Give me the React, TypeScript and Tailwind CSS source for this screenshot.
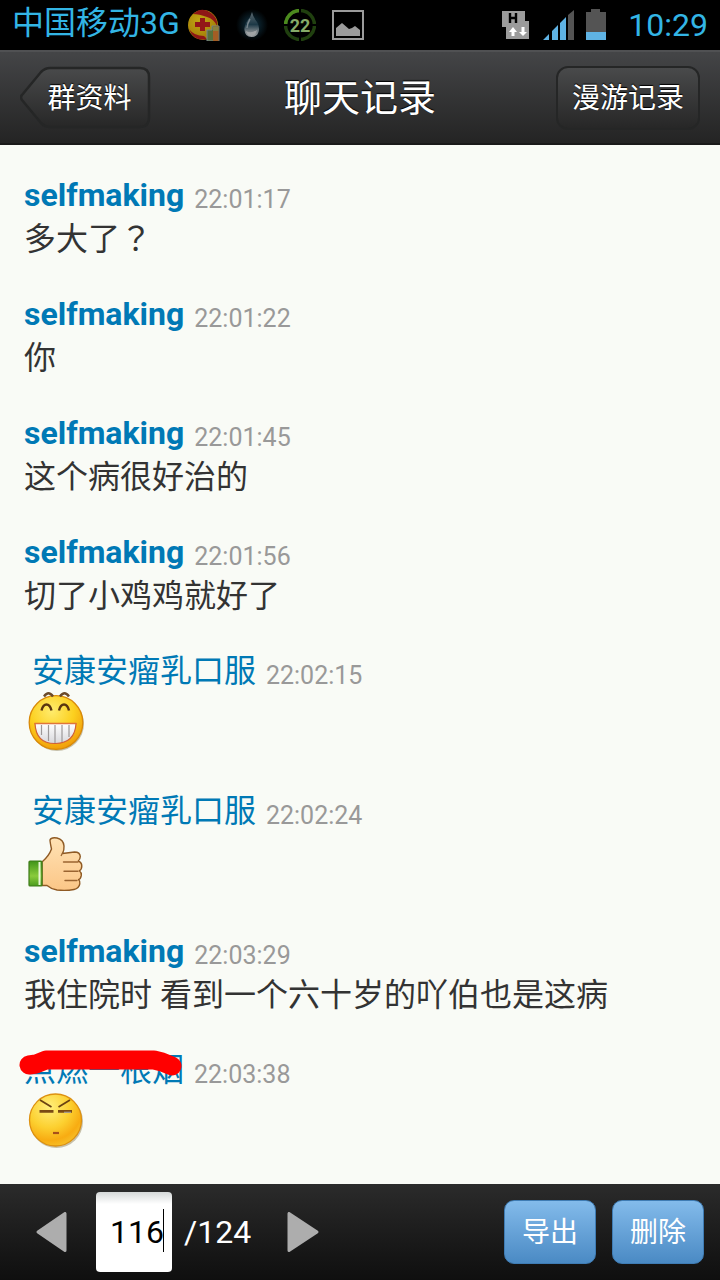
import React, { useState } from 'react';

interface Message {
  id: number;
  name: string;
  time: string;
  lang?: string;
  bold?: boolean;
  masked?: boolean;
  text?: string;
  emoji?: 'grin' | 'thumb' | 'squint';
}

const TOTAL_PAGES = 124;

const MESSAGES: Message[] = [
  { id: 1, name: 'selfmaking', time: '22:01:17', bold: true, lang: 'zh-TW', text: '多大了？' },
  { id: 2, name: 'selfmaking', time: '22:01:22', bold: true, text: '你' },
  { id: 3, name: 'selfmaking', time: '22:01:45', bold: true, text: '这个病很好治的' },
  { id: 4, name: 'selfmaking', time: '22:01:56', bold: true, text: '切了小鸡鸡就好了' },
  { id: 5, name: ' 安康安瘤乳口服', time: '22:02:15', emoji: 'grin' },
  { id: 6, name: ' 安康安瘤乳口服', time: '22:02:24', emoji: 'thumb' },
  { id: 7, name: 'selfmaking', time: '22:03:29', bold: true, text: '我住院时 看到一个六十岁的吖伯也是这病' },
  { id: 8, name: '点燃一根烟', time: '22:03:38', masked: true, emoji: 'squint' },
];

const Grin = () => (
  <svg className="block h-[65px] w-16" viewBox="0 0 64 65" role="img" aria-label="呲牙">
    <defs>
      <radialGradient id="grinFace" cx="0.42" cy="0.28" r="0.75">
        <stop offset="0" stopColor="#ffec6e" />
        <stop offset="0.55" stopColor="#fcd01f" />
        <stop offset="1" stopColor="#f09a08" />
      </radialGradient>
      <linearGradient id="teeth" x1="0" y1="0" x2="0" y2="1">
        <stop offset="0" stopColor="#ffffff" />
        <stop offset="1" stopColor="#d8d8dc" />
      </linearGradient>
    </defs>
    <circle cx="33" cy="33" r="27" fill="#8a7a50" opacity="0.45" />
    <circle cx="32" cy="31.500" r="26.800" fill="url(#grinFace)" stroke="#d98a08" strokeWidth="1.300" />
    <path d="M20 5.500q4.500-6.500 9 0M36 5.500q4.500-6.500 9 0" fill="none" stroke="#6b4a2a" strokeWidth="2.400" />
    <path d="M17.500 19.500q1.500-6 5-6t5 6M35 19.500q1.500-6 5-6t5 6" fill="none" stroke="#5a3510" strokeWidth="2.400" />
    <path d="M11 32.500h41q-1 19.500-20.500 20T11 32.500z" fill="url(#teeth)" stroke="#d0603a" strokeWidth="1.200" />
    <path d="M17.500 34v10M24.500 34v16M31 34v18M38 34v17M45 34v12" stroke="#9c9898" strokeWidth="1.200" />
    <path d="M10.500 32.500h42" stroke="#e0753a" strokeWidth="1.500" />
  </svg>
);

const Thumb = () => (
  <svg className="block h-[65px] w-16" viewBox="0 0 64 65" role="img" aria-label="强">
    <defs>
      <linearGradient id="cuff" x1="0" y1="0" x2="0" y2="1">
        <stop offset="0" stopColor="#3f9418" />
        <stop offset="0.6" stopColor="#8acb3c" />
        <stop offset="1" stopColor="#4b9c1e" />
      </linearGradient>
      <linearGradient id="skin" x1="0" y1="0" x2="0" y2="1">
        <stop offset="0" stopColor="#ffe2b4" />
        <stop offset="1" stopColor="#fbc687" />
      </linearGradient>
    </defs>
    <path
      d="M18 31q7-6 9.500-13-1.500-7-1.500-9 1-3 7-2 6.500 1.500 7 8 .3 4-1.500 7.500l12-1.500q5.500 0 5.800 4.500-.2 3-2 4.500 3.500 1.500 3.500 5t-2.500 4.800q2.300 1.700 2 4.600-.5 3.500-2.800 4.200 1.800 1.600 1.300 4.300-.8 4.600-5.800 5.600-8 1.500-17 .5-6-1-10-4.500h-5z"
      fill="url(#skin)"
      stroke="#8f5a24"
      strokeWidth="1.400"
      strokeLinejoin="round"
    />
    <path d="M39.500 31H54M40 40.300h14M41 49.500h12" fill="none" stroke="#9a6430" strokeWidth="1.400" strokeLinecap="round" />
    <path d="M38.500 22l-1.500 3" stroke="#9a6430" strokeWidth="1.200" />
    <rect x="5" y="30" width="13" height="25" rx="1" fill="url(#cuff)" stroke="#3d7a18" strokeWidth="1.200" />
    <path d="M15.500 31v23" stroke="#e9f6d8" strokeWidth="2" />
  </svg>
);

const Squint = () => (
  <svg className="block h-[65px] w-16" viewBox="0 0 64 65" role="img" aria-label="白眼">
    <defs>
      <radialGradient id="squintFace" cx="0.38" cy="0.25" r="0.8">
        <stop offset="0" stopColor="#ffef7c" />
        <stop offset="0.5" stopColor="#fcd030" />
        <stop offset="0.8" stopColor="#f8ac12" />
        <stop offset="1" stopColor="#f6c22a" />
      </radialGradient>
    </defs>
    <circle cx="32.500" cy="31.500" r="26.500" fill="#8a7a50" opacity="0.45" />
    <circle cx="31.500" cy="30" r="26" fill="url(#squintFace)" stroke="#dd9110" strokeWidth="1.300" />
    <path d="M16 10l11.500 7M46 10l-11.500 7" stroke="#6b4312" strokeWidth="1.800" />
    <path d="M15.500 21.300h14M34 21.300h14" stroke="#7a4a14" strokeWidth="2.800" />
    <path d="M40 22.300h7" stroke="#a8a098" strokeWidth="1.200" />
    <path d="M29 43h6" stroke="#a8501a" strokeWidth="2.200" />
  </svg>
);

const EMOJI = { grin: Grin, thumb: Thumb, squint: Squint };

const StatusBar = () => (
  <div className="flex h-[50px] shrink-0 items-center justify-between bg-black pr-3 pl-3 text-[32px] leading-[50px] text-[#33b5e5]">
    <div className="flex items-center gap-4">
      <div className="flex items-center gap-2">
        <span className="pb-1">中国移动3G</span>
        <svg className="size-8" viewBox="0 0 32 32" aria-hidden="true">
          <defs>
            <radialGradient id="ball" cx="0.4" cy="0.35" r="0.7">
              <stop offset="0" stopColor="#c0a814" />
              <stop offset="1" stopColor="#a17806" />
            </radialGradient>
          </defs>
          <circle cx="15" cy="16" r="15" fill="url(#ball)" />
          <path d="M5 5Q14-3 23 4q7 5 6 13-3-7-10-9Q11 5 5 5z" fill="#8e1716" />
          <path d="M1 20q5 7 15 7l3 3Q6 33 1 20z" fill="#8e1716" />
          <path d="M12 9h5v4h5v5h-5v4h-5v-4H7v-5h5z" fill="#931718" />
          <path d="M19 32V21h5v-4h7v15z" fill="#56703b" stroke="#77838a" strokeWidth="1" />
          <path d="M25 17.500h5.500V32H25z" fill="#a35d24" />
          <path d="M25 17.500h5.500V22H25z" fill="#87813f" />
        </svg>
      </div>
      <svg className="size-8" viewBox="0 0 32 32" aria-hidden="true">
        <defs>
          <radialGradient id="glow">
            <stop offset="0" stopColor="#12384a" />
            <stop offset="1" stopColor="#000000" />
          </radialGradient>
          <linearGradient id="drop" x1="0" y1="0" x2="0" y2="1">
            <stop offset="0" stopColor="#5d6a70" />
            <stop offset="0.5" stopColor="#1d3947" />
            <stop offset="0.75" stopColor="#6f7a80" />
            <stop offset="1" stopColor="#9a9fa2" />
          </linearGradient>
        </defs>
        <circle cx="16" cy="16" r="16" fill="url(#glow)" />
        <path d="M16 3q1 5 5 10 2.500 4 2 8-1 7-7.500 7T8.500 21q-.5-4 2-8Q15 8 16 3z" fill="url(#drop)" />
        <path d="M14 10q-3 5-3 9" fill="none" stroke="#77858c" strokeWidth="1.500" />
        <path d="M10 22q5 3 11-1-1 6-5.500 6T10 22z" fill="#a0a4a6" />
      </svg>
      <svg className="size-8" viewBox="0 0 32 32" aria-hidden="true">
        <circle cx="16" cy="16" r="14.500" fill="none" stroke="#20400f" strokeWidth="3.500" />
        <path d="M1.500 16A14.500 14.500 0 0 1 16 1.500" fill="none" stroke="#4c8a1e" strokeWidth="3.500" />
        <path d="M16-1v6M16 27v6M-1 16h6M27 16h6" stroke="#000" strokeWidth="2" />
        <text x="16" y="22.500" textAnchor="middle" fontSize="18" fontWeight="700" fill="#86ab68">22</text>
      </svg>
      <svg className="size-8" viewBox="0 0 32 32" aria-hidden="true">
        <rect x="1" y="2" width="30" height="28" fill="none" stroke="#9b9b9b" strokeWidth="2" />
        <path d="M4 27v-8l6-5 7 6 3-1 3-2 5 4v6z" fill="#9b9b9b" />
      </svg>
    </div>
    <div className="flex items-center gap-3">
      <svg className="h-7 w-7" viewBox="0 0 28 28" aria-hidden="true">
        <path d="M0 0h23v10h4v18H4V16H0z" fill="#9b9b9b" />
        <path d="M8 2v10M14 2v10M8 7h6" stroke="#000" strokeWidth="2.400" />
        <path d="M11 16l4 5h-2.500v4h-3v-4H7zM21 25l4-4h-2.500v-5h-3v5H17z" fill="#fff" />
      </svg>
      <svg className="h-8 w-8" viewBox="0 0 32 32" aria-hidden="true">
        <path d="M1 31l6-6v6zM10 31V22l6-6v15zM18 31V14l6-6v23z" fill="#5fb3e4" />
        <path d="M26 31V6l6-5v30z" fill="#545454" />
      </svg>
      <svg className="h-8 w-5" viewBox="0 0 20 32" aria-hidden="true">
        <path d="M5 0h9v3h6v28H0V3h5z" fill="#545454" />
        <path d="M0 23h20v8H0z" fill="#5fb3e4" />
      </svg>
      <span className="ml-[10px]">10:29</span>
    </div>
  </div>
);

const MessageItem: React.FC<{ message: Message }> = ({ message }) => {
  const Emoji = message.emoji ? EMOJI[message.emoji] : null;
  return (
    <li>
      <div className="flex items-end gap-[10px]">
        <span className={`relative text-[32px] leading-10 whitespace-pre text-[#0079b5] ${message.bold ? 'font-bold' : ''}`}>
          {message.name}
          {message.masked && (
            <svg className="absolute -top-1 -left-2 h-8 w-[172px]" viewBox="0 0 172 32" aria-hidden="true">
              <path
                d="M13 19L20 18L30 14H138L146 16L156 20"
                fill="none"
                stroke="#ff0000"
                strokeWidth="19"
                strokeLinecap="round"
                strokeLinejoin="round"
              />
            </svg>
          )}
        </span>
        <time className="text-[25px] leading-[30px] text-[#999999]">{message.time}</time>
      </div>
      {Emoji ? (
        <Emoji />
      ) : (
        <p
          lang={message.lang}
          className={`pt-1 text-[32px] leading-10 text-[#333333] ${message.lang === 'zh-TW' ? "font-['Roboto','Noto_Sans_CJK_TC',sans-serif]" : ''}`}
        >
          {message.text}
        </p>
      )}
    </li>
  );
};

export default function App() {
  const [page, setPage] = useState('116');

  const step = (delta: number) => {
    const n = (parseInt(page) || 1) + delta;
    setPage(String(Math.min(TOTAL_PAGES, Math.max(1, n))));
  };

  return (
    <div lang="zh-CN" className="flex min-h-screen flex-col bg-[#f9fbf6] font-['Roboto','Noto_Sans_CJK_SC',sans-serif]">
      <StatusBar />

      <header className="grid h-[95px] shrink-0 grid-cols-[1fr_auto_1fr] items-center border-t-2 border-b-2 border-t-[#505153] border-b-[#1a1a1a] bg-linear-to-b from-[#444547] to-[#242424] px-5 text-white">
        <button className="relative h-16 w-[131px] justify-self-start pt-[2px] pl-2 text-[28px] [text-shadow:0_-1px_1px_#000]">
          <svg className="absolute inset-0 size-full" viewBox="0 0 131 64" aria-hidden="true">
            <defs>
              <linearGradient id="back" x1="0" y1="0" x2="0" y2="1">
                <stop offset="0" stopColor="#494a4b" />
                <stop offset="1" stopColor="#272727" />
              </linearGradient>
            </defs>
            <path
              d="M2 29L21 6Q25 2 30 2H120Q129 2 129 11V52Q129 61 120 61H30Q25 61 21 57L2 34Q0 31 2 29z"
              fill="url(#back)"
              stroke="#252626"
              strokeWidth="2.500"
            />
          </svg>
          <span className="relative">群资料</span>
        </button>
        <h1 className="text-[38px] leading-none [text-shadow:0_-1px_1px_#000]">聊天记录</h1>
        <button className="h-16 justify-self-end rounded-xl border-2 border-[#252626] bg-linear-to-b from-[#494a4b] to-[#272727] px-[14px] pt-[2px] text-[28px] [text-shadow:0_-1px_1px_#000]">
          漫游记录
        </button>
      </header>

      <main className="flex-1 px-6 pt-[30px] pb-7">
        <ul className="flex flex-col gap-[35px]">
          {MESSAGES.map((m) => (
            <MessageItem key={m.id} message={m} />
          ))}
        </ul>
      </main>

      <footer className="flex h-24 shrink-0 items-center justify-between bg-linear-to-b from-[#2b2b2b] to-[#0f0f0f] pr-4 pl-6 text-white">
        <div className="flex items-center">
          <button aria-label="上一页" onClick={() => step(-1)} className="mr-4 flex h-16 w-14 items-center justify-center">
            <svg className="h-10 w-8" viewBox="0 0 32 40" aria-hidden="true">
              <path d="M29 1.500v37L2 20z" fill="#adadad" stroke="#adadad" strokeWidth="3" strokeLinejoin="round" />
            </svg>
          </button>
          <div className="relative">
            <input
              aria-label="页码"
              inputMode="numeric"
              value={page}
              onChange={(e) => setPage(e.target.value)}
              className="block h-20 w-[76px] rounded bg-white bg-linear-to-b from-[#d5d8d8] to-white to-15% pr-2 text-right text-[32px] text-black outline-none"
            />
            <span className="absolute top-[17px] right-2 h-[43px] w-px bg-black" />
          </div>
          <span className="px-3 text-[32px]">/{TOTAL_PAGES}</span>
          <button aria-label="下一页" onClick={() => step(1)} className="ml-3 flex h-16 w-14 items-center justify-center">
            <svg className="h-10 w-8" viewBox="0 0 32 40" aria-hidden="true">
              <path d="M2 1.500v37L30 20z" fill="#adadad" stroke="#adadad" strokeWidth="3" strokeLinejoin="round" />
            </svg>
          </button>
        </div>
        <div className="flex gap-4 text-[28px]">
          <button className="h-16 w-[92px] rounded-[10px] border border-[#3f7cb4] bg-linear-to-b from-[#83bbeb] to-[#4a8ac4] pt-[2px]">导出</button>
          <button className="h-16 w-[92px] rounded-[10px] border border-[#3f7cb4] bg-linear-to-b from-[#83bbeb] to-[#4a8ac4] pt-[2px]">删除</button>
        </div>
      </footer>
    </div>
  );
}
